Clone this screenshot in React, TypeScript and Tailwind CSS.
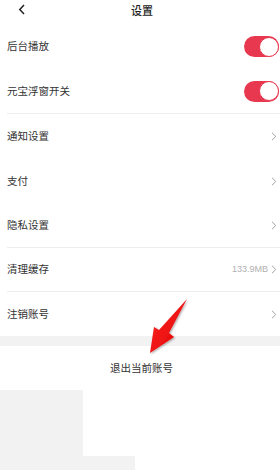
import React from "react";

const font = { fontFamily: '"Noto Sans CJK SC", "Noto Sans", sans-serif' };

function Toggle() {
  return (
    <div className="relative w-[35px] h-[21px] rounded-full bg-[#e8384f]">
      <div className="absolute right-0 top-[0.5px] w-[20px] h-[20px] rounded-full bg-white border border-[#e8384f]" />
    </div>
  );
}

function Chevron() {
  return (
    <svg width="6" height="9" viewBox="0 0 6 9" className="block">
      <path d="M1 0.8 L4.8 4.5 L1 8.2" fill="none" stroke="#9a9a9a" strokeWidth="0.9" />
    </svg>
  );
}

function Row({
  label,
  h,
  divider,
  right,
}: {
  label: string;
  h: string;
  divider?: boolean;
  right: React.ReactNode;
}) {
  return (
    <div className={`${h} pl-[7px] flex`}>
      <div
        className={`flex-1 flex items-center justify-between ${
          divider ? "border-b border-[#eeeeee]" : ""
        }`}
      >
        <span className="text-[10.5px] leading-none text-[#333333]">{label}</span>
        {right}
      </div>
    </div>
  );
}

export default function App() {
  return (
    <div className="relative w-[280px] h-[470px] bg-white overflow-hidden" style={font}>
      {/* header */}
      <div className="relative h-[24px] flex justify-center pt-[4px]">
        <svg width="8" height="11" viewBox="0 0 8 11" className="absolute left-[18px] top-[4px]">
          <path d="M6 1 L1.8 5.5 L6 10" fill="none" stroke="#222" strokeWidth="1.5" />
        </svg>
        <span className="ml-[4px] text-[11px] leading-[12px] font-medium text-[#222]">设置</span>
      </div>

      <Row label="后台播放" h="h-[45px]" right={<div className="pr-[1px]"><Toggle /></div>} />
      <Row label="元宝浮窗开关" h="h-[45px]" divider right={<div className="pr-[1px]"><Toggle /></div>} />
      <Row label="通知设置" h="h-[45px]" right={<div className="pr-[3px]"><Chevron /></div>} />
      <Row label="支付" h="h-[45px]" right={<div className="pr-[3px]"><Chevron /></div>} />
      <Row label="隐私设置" h="h-[44px]" divider right={<div className="pr-[3px]"><Chevron /></div>} />
      <Row
        label="清理缓存"
        h="h-[44px]"
        divider
        right={
          <div className="flex items-center gap-[3px] pr-[3px]">
            <span className="text-[9px] leading-none text-[#b0b0b0]" style={{ fontFamily: '"Liberation Sans", sans-serif' }}>
              133.9MB
            </span>
            <Chevron />
          </div>
        }
      />
      <Row label="注销账号" h="h-[44px]" right={<div className="pr-[3px]"><Chevron /></div>} />

      <div className="h-[10px] bg-[#f2f2f2]" />

      <div className="h-[44px] flex items-center justify-center">
        <span className="ml-[3px] text-[10.5px] leading-none text-[#333333]">退出当前账号</span>
      </div>

      <div className="w-[83px] h-[66px] bg-[#f2f2f2]" />
      <div className="w-[135px] h-[14px] bg-[#f2f2f2]" />

      {/* annotation arrow */}
      <svg
        className="absolute left-0 top-0 pointer-events-none"
        width="280"
        height="470"
        viewBox="0 0 280 470"
      >
        <defs>
          <filter id="sh" x="-20%" y="-20%" width="140%" height="140%">
            <feDropShadow dx="1" dy="1" stdDeviation="1" floodColor="#000" floodOpacity="0.35" />
          </filter>
          <linearGradient id="rg" x1="0" y1="0" x2="1" y2="1">
            <stop offset="0" stopColor="#ff2a2a" />
            <stop offset="1" stopColor="#e00000" />
          </linearGradient>
        </defs>
        <polygon
          points="187,299 169,333 174,337 150,353 154,327 159,330"
          fill="url(#rg)"
          filter="url(#sh)"
        />
      </svg>
    </div>
  );
}
